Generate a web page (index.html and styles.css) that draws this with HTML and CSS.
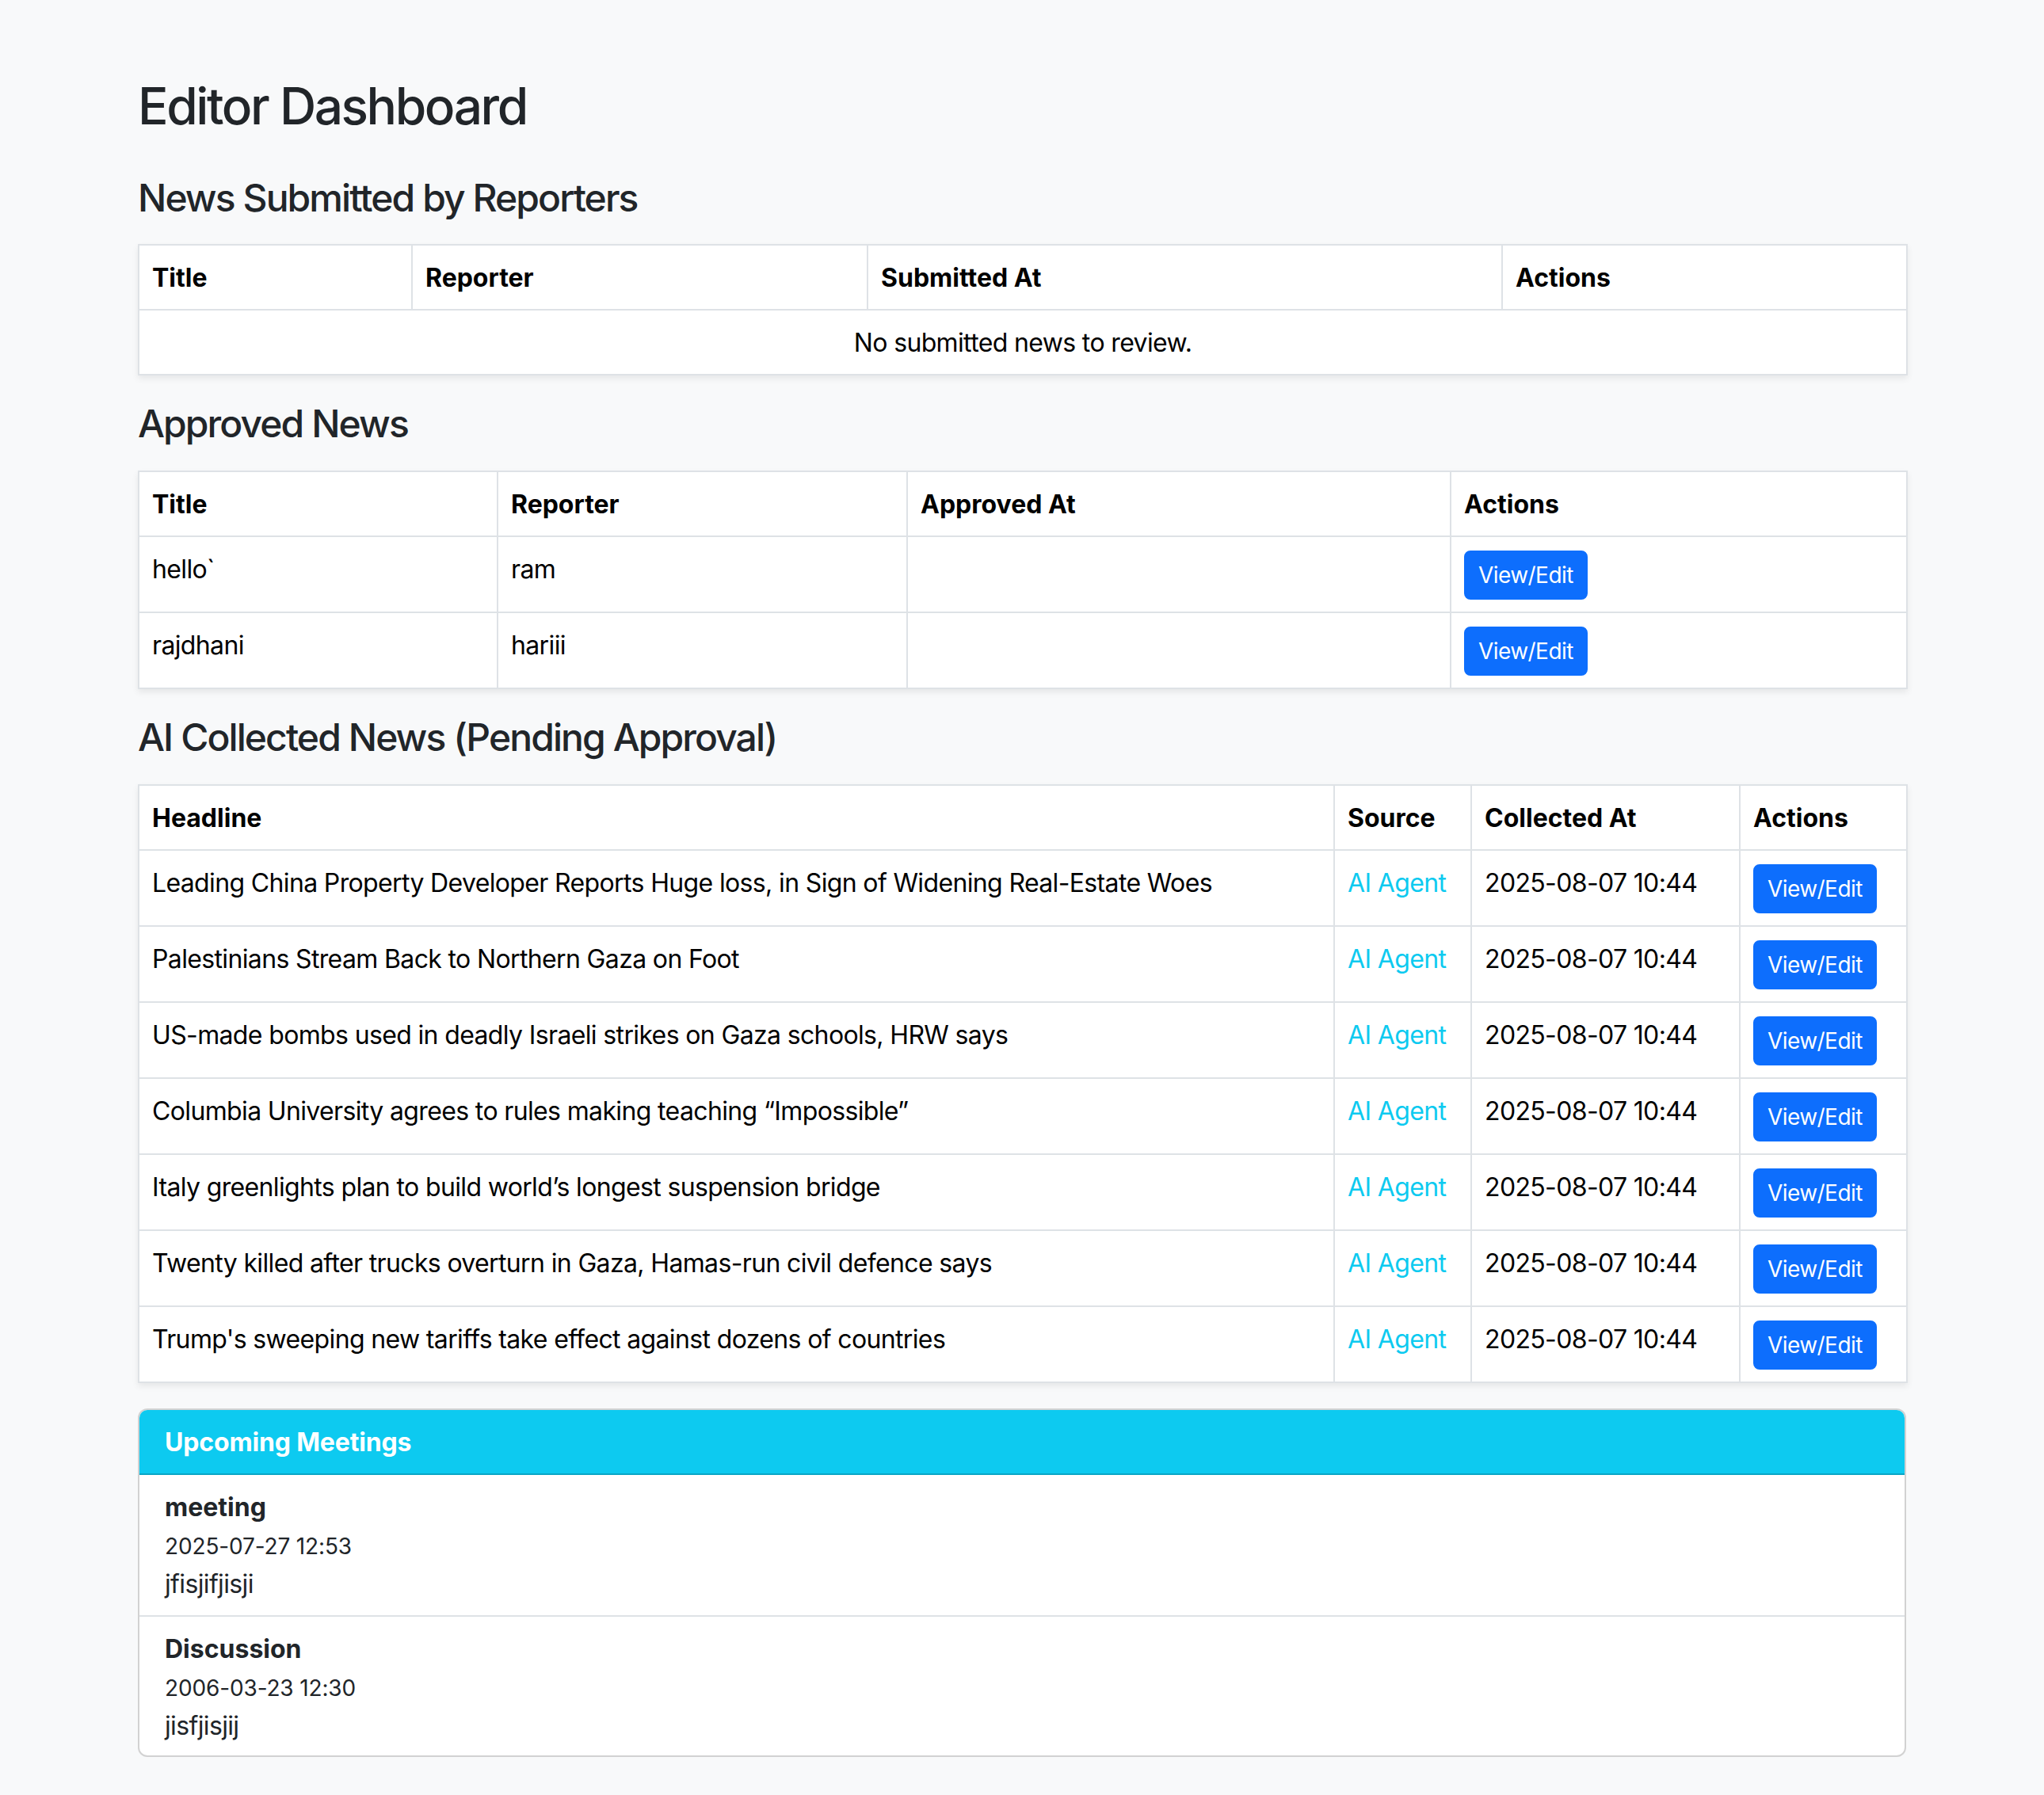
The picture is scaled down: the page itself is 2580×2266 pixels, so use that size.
FILE: index.html
```html
<!DOCTYPE html>
<html lang="en">
<head>
<meta charset="utf-8">
<title>Editor Dashboard</title>
<link rel="stylesheet" href="styles.css">
</head>
<body>
<div class="container">
  <h2 class="page-title">Editor Dashboard</h2>

  <h4 class="section-title">News Submitted by Reporters</h4>
  <table class="data-table t-submitted">
    <colgroup><col class="c1"><col class="c2"><col class="c3"><col class="c4"></colgroup>
    <thead>
      <tr><th>Title</th><th>Reporter</th><th>Submitted At</th><th>Actions</th></tr>
    </thead>
    <tbody>
      <tr><td colspan="4" class="empty">No submitted news to review.</td></tr>
    </tbody>
  </table>

  <h4 class="section-title">Approved News</h4>
  <table class="data-table t-approved">
    <colgroup><col class="c1"><col class="c2"><col class="c3"><col class="c4"></colgroup>
    <thead>
      <tr><th>Title</th><th>Reporter</th><th>Approved At</th><th>Actions</th></tr>
    </thead>
    <tbody>
      <tr><td>hello`</td><td>ram</td><td></td><td><a class="btn" href="#">View/Edit</a></td></tr>
      <tr><td>rajdhani</td><td>hariii</td><td></td><td><a class="btn" href="#">View/Edit</a></td></tr>
    </tbody>
  </table>

  <h4 class="section-title">AI Collected News (Pending Approval)</h4>
  <table class="data-table t-ai">
    <colgroup><col class="c1"><col class="c2"><col class="c3"><col class="c4"></colgroup>
    <thead>
      <tr><th>Headline</th><th>Source</th><th>Collected At</th><th>Actions</th></tr>
    </thead>
    <tbody>
      <tr><td>Leading China Property Developer Reports Huge loss, in Sign of Widening Real-Estate Woes</td><td class="source">AI Agent</td><td>2025-08-07 10:44</td><td><a class="btn" href="#">View/Edit</a></td></tr>
      <tr><td>Palestinians Stream Back to Northern Gaza on Foot</td><td class="source">AI Agent</td><td>2025-08-07 10:44</td><td><a class="btn" href="#">View/Edit</a></td></tr>
      <tr><td>US-made bombs used in deadly Israeli strikes on Gaza schools, HRW says</td><td class="source">AI Agent</td><td>2025-08-07 10:44</td><td><a class="btn" href="#">View/Edit</a></td></tr>
      <tr><td>Columbia University agrees to rules making teaching “Impossible”</td><td class="source">AI Agent</td><td>2025-08-07 10:44</td><td><a class="btn" href="#">View/Edit</a></td></tr>
      <tr><td>Italy greenlights plan to build world’s longest suspension bridge</td><td class="source">AI Agent</td><td>2025-08-07 10:44</td><td><a class="btn" href="#">View/Edit</a></td></tr>
      <tr><td>Twenty killed after trucks overturn in Gaza, Hamas-run civil defence says</td><td class="source">AI Agent</td><td>2025-08-07 10:44</td><td><a class="btn" href="#">View/Edit</a></td></tr>
      <tr><td>Trump's sweeping new tariffs take effect against dozens of countries</td><td class="source">AI Agent</td><td>2025-08-07 10:44</td><td><a class="btn" href="#">View/Edit</a></td></tr>
    </tbody>
  </table>

  <div class="card">
    <div class="card-header">Upcoming Meetings</div>
    <ul class="list-group">
      <li class="list-item"><strong>meeting</strong><br><small>2025-07-27 12:53</small><br>jfisjifjisji</li>
      <li class="list-item"><strong>Discussion</strong><br><small>2006-03-23 12:30</small><br>jisfjisjij</li>
    </ul>
  </div>
</div>
</body>
</html>
```

FILE: styles.css
```css
html {
  background: #f8f9fa;
}
body {
  margin: 0;
  background: #f8f9fa;
  color: #212529;
  font-family: Inter, "Noto Sans", "Liberation Sans", sans-serif;
  font-size: 32px;
  line-height: 48px;
  letter-spacing: -0.02em;
}
.container {
  max-width: 2280px;
  box-sizing: border-box;
  margin: 0 auto;
  padding: 96px 24px 48px;
}
.page-title {
  font-size: 64px;
  font-weight: 500;
  line-height: 76.8px;
  letter-spacing: -0.038em;
  margin: 0 0 48px;
}
.section-title {
  font-size: 48px;
  font-weight: 500;
  line-height: 57.6px;
  letter-spacing: -0.04em;
  margin: 0 0 30px;
}
.data-table {
  width: 100%;
  table-layout: fixed;
  border-collapse: collapse;
  background: #fff;
  color: #000;
  vertical-align: top;
  margin-bottom: 32px;
  box-shadow: 0 4px 8px rgba(0, 0, 0, 0.075);
}
.data-table th,
.data-table td {
  padding: 17px 16px 15px;
  border: 2px solid #dee2e6;
  text-align: left;
  vertical-align: top;
}
.data-table th {
  font-weight: 700;
  letter-spacing: 0;
}
.data-table td.empty {
  text-align: center;
}
.t-submitted .c1 { width: 345px; }
.t-submitted .c2 { width: 575px; }
.t-submitted .c3 { width: 801px; }
.t-submitted .c4 { width: 511px; }
.t-approved .c1 { width: 453px; }
.t-approved .c2 { width: 517px; }
.t-approved .c3 { width: 686px; }
.t-approved .c4 { width: 576px; }
.t-ai .c1 { width: 1509px; }
.t-ai .c2 { width: 173px; }
.t-ai .c3 { width: 339px; }
.t-ai .c4 { width: 211px; }
.source {
  color: #0dcaf0;
}
.btn {
  display: inline-block;
  background: #0d6efd;
  color: #fff;
  border: 2px solid #0d6efd;
  border-radius: 8px;
  padding: 8px 16px;
  font-size: 28px;
  line-height: 42px;
  letter-spacing: -0.02em;
  text-decoration: none;
  vertical-align: middle;
}
.card {
  background: #fff;
  border: 2px solid rgba(0, 0, 0, 0.175);
  border-radius: 12px;
  overflow: hidden;
}
.card-header {
  background: #0dcaf0;
  color: #fff;
  font-weight: 700;
  letter-spacing: -0.005em;
  padding: 17px 32px 15px;
  border-bottom: 2px solid rgba(0, 0, 0, 0.175);
}
.list-group {
  list-style: none;
  margin: 0;
  padding: 0;
}
.list-item {
  padding: 17px 32px 15px;
  border-bottom: 2px solid #dee2e6;
}
.list-item:last-child {
  border-bottom: 0;
  padding-bottom: 13px;
}
.list-item strong {
  font-weight: 700;
  letter-spacing: 0;
}
.list-item small {
  font-size: 28px;
  letter-spacing: -0.005em;
}
```
